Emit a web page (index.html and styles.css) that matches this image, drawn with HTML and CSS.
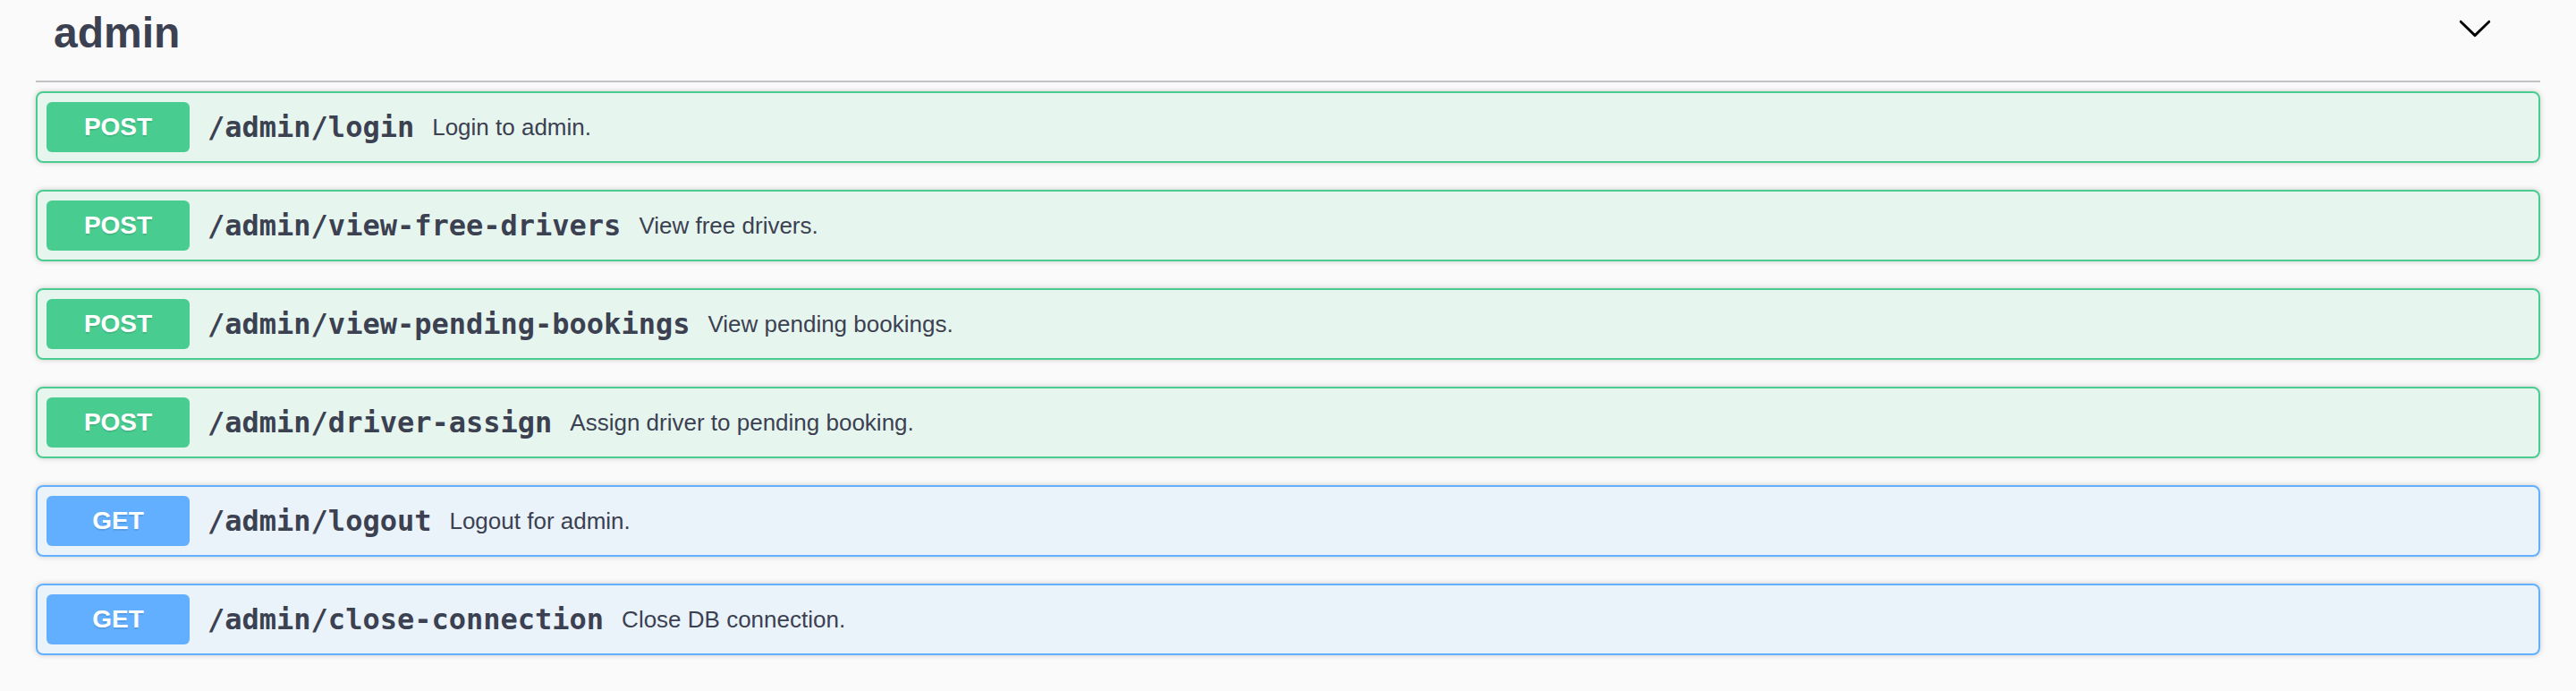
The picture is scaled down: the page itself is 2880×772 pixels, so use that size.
FILE: index.html
```html
<!DOCTYPE html>
<html lang="en">
<head>
<meta charset="utf-8">
<title>admin</title>
<link rel="stylesheet" href="styles.css">
</head>
<body>
<div class="wrapper">
  <section class="tag-section">
    <h3 class="opblock-tag">
      <span class="tag-name">admin</span>
      <button class="expand-operation" aria-label="Collapse operation">
        <svg class="arrow" width="40" height="40" viewBox="0 0 20 20" aria-hidden="true">
          <path d="M17.418 6.109c.272-.268.709-.268.979 0s.271.701 0 .969l-7.908 7.83c-.27.268-.707.268-.979 0l-7.908-7.83c-.27-.268-.27-.701 0-.969.271-.268.709-.268.979 0L10 13.25l7.418-7.141z"/>
        </svg>
      </button>
    </h3>
    <div class="operations">
      <div class="opblock opblock-post">
        <div class="opblock-summary">
          <span class="method">POST</span>
          <span class="path">/admin/login</span>
          <span class="description">Login to admin.</span>
        </div>
      </div>
      <div class="opblock opblock-post">
        <div class="opblock-summary">
          <span class="method">POST</span>
          <span class="path">/admin/view-free-drivers</span>
          <span class="description">View free drivers.</span>
        </div>
      </div>
      <div class="opblock opblock-post">
        <div class="opblock-summary">
          <span class="method">POST</span>
          <span class="path">/admin/view-pending-bookings</span>
          <span class="description">View pending bookings.</span>
        </div>
      </div>
      <div class="opblock opblock-post">
        <div class="opblock-summary">
          <span class="method">POST</span>
          <span class="path">/admin/driver-assign</span>
          <span class="description">Assign driver to pending booking.</span>
        </div>
      </div>
      <div class="opblock opblock-get">
        <div class="opblock-summary">
          <span class="method">GET</span>
          <span class="path">/admin/logout</span>
          <span class="description">Logout for admin.</span>
        </div>
      </div>
      <div class="opblock opblock-get">
        <div class="opblock-summary">
          <span class="method">GET</span>
          <span class="path">/admin/close-connection</span>
          <span class="description">Close DB connection.</span>
        </div>
      </div>
    </div>
  </section>
</div>
</body>
</html>
```

FILE: styles.css
```css
html, body {
  margin: 0;
  padding: 0;
  background: #fafafa;
}

body {
  font-family: "Liberation Sans", Arial, sans-serif;
  color: #3b4151;
}

.wrapper {
  padding: 0 40px;
}

.opblock-tag {
  display: flex;
  align-items: flex-start;
  margin: 0 0 10px;
  padding: 9px 40px 25px 20px;
  border-bottom: 2px solid rgba(59, 65, 81, 0.3);
  font-family: "Liberation Sans", Arial, sans-serif;
  font-size: 48px;
  font-weight: 700;
  line-height: 56px;
  color: #3b4151;
}

.tag-name {
  flex: 1;
}

.expand-operation {
  display: block;
  margin: 2px 0 0 auto;
  padding: 0 13px 0 0;
  border: none;
  background: none;
}

.expand-operation svg {
  display: block;
  fill: #000;
}

.opblock {
  margin: 0 0 30px;
  border: 2px solid #000;
  border-radius: 8px;
  box-shadow: 0 0 6px rgba(0, 0, 0, 0.19);
}

.opblock-summary {
  display: flex;
  align-items: center;
  padding: 10px;
}

.method {
  min-width: 160px;
  padding: 12px 0;
  border-radius: 6px;
  font-family: "Liberation Sans", Arial, sans-serif;
  font-size: 28px;
  font-weight: 700;
  line-height: 32px;
  text-align: center;
  color: #fff;
  text-shadow: 0 2px 0 rgba(0, 0, 0, 0.1);
}

.path {
  padding: 0 20px;
  font-family: "DejaVu Sans Mono", "Liberation Mono", monospace;
  font-size: 32px;
  font-weight: 700;
  color: #3b4151;
}

.description {
  font-family: "Liberation Sans", Arial, sans-serif;
  font-size: 26px;
  color: #3b4151;
}

.opblock-post {
  background: rgba(73, 204, 144, 0.1);
  border-color: #49cc90;
}

.opblock-post .method {
  background: #49cc90;
}

.opblock-get {
  background: rgba(97, 175, 254, 0.1);
  border-color: #61affe;
}

.opblock-get .method {
  background: #61affe;
}
```
